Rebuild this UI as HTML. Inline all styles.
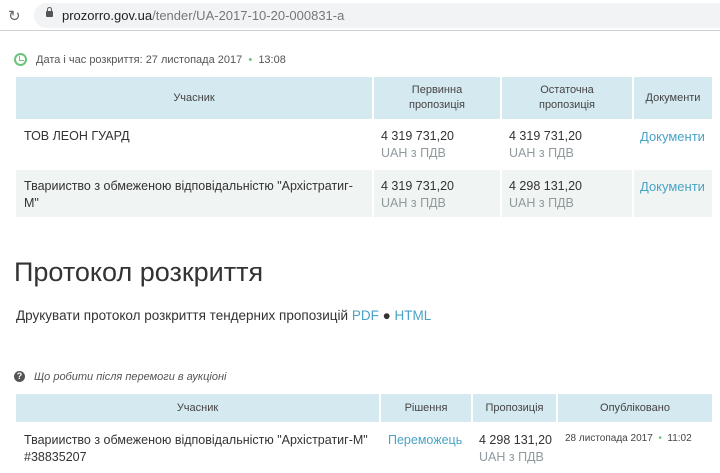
<!DOCTYPE html>
<html><head><meta charset="utf-8"><style>
*{margin:0;padding:0;box-sizing:border-box}
body{width:720px;height:473px;overflow:hidden;background:#fff;font-family:"Liberation Sans",sans-serif;color:#333;position:relative}
.a{position:absolute}
.hd{background:#d5eaf0;color:#444;font-size:11px;text-align:center;display:flex;align-items:center;justify-content:center;line-height:15px}
.c{font-size:12.5px;color:#333;line-height:17px}
.g{color:#8e9a9e}
.l{color:#4aa3c4}
</style></head><body>
<div class="a" style="left:0;top:0;width:720px;height:31px;background:#fff;border-bottom:1px solid #d0d0d0"></div>
<div class="a" style="left:8px;top:7px;font-size:15px;color:#666">&#x21bb;</div>
<div class="a" style="left:34px;top:3px;width:700px;height:25px;border-radius:13px;background:#f1f3f4"></div>
<div class="a" style="left:46px;top:11px;width:7px;height:6px;background:#555;border-radius:1px"></div>
<div class="a" style="left:47px;top:7px;width:5px;height:6px;border:1.5px solid #555;border-bottom:none;border-radius:3px 3px 0 0"></div>
<div class="a" style="left:62px;top:8px;font-size:13px;color:#202124">prozorro.gov.ua<span style="color:#777">/tender/UA-2017-10-20-000831-a</span></div>

<div class="a" style="left:14px;top:53px;width:13px;height:13px;border:2px solid #6cc47a;border-radius:50%"></div>
<div class="a" style="left:19px;top:56px;width:5px;height:5px;border-left:1.5px solid #6cc47a;border-bottom:1.5px solid #6cc47a"></div>
<div class="a" style="left:36px;top:54px;font-size:11px;color:#555">Дата і час розкриття: 27 листопада 2017 &nbsp;<span style="color:#6cc47a">•</span>&nbsp; 13:08</div>

<div class="a hd" style="left:16px;top:77px;width:356px;height:42px">Учасник</div>
<div class="a hd" style="left:374px;top:77px;width:126px;height:42px">Первинна<br>пропозиція</div>
<div class="a hd" style="left:502px;top:77px;width:130px;height:42px">Остаточна<br>пропозиція</div>
<div class="a hd" style="left:634px;top:77px;width:78px;height:42px">Документи</div>

<div class="a c" style="left:24px;top:128px">ТОВ ЛЕОН ГУАРД</div>
<div class="a c" style="left:381px;top:128px">4 319 731,20<br><span class="g">UAH з ПДВ</span></div>
<div class="a c" style="left:509px;top:128px">4 319 731,20<br><span class="g">UAH з ПДВ</span></div>
<div class="a c l" style="left:640px;top:128px;font-size:13px">Документи</div>

<div class="a" style="left:16px;top:170px;width:356px;height:47px;background:#f0f4f2"></div>
<div class="a" style="left:374px;top:170px;width:126px;height:47px;background:#f0f4f2"></div>
<div class="a" style="left:502px;top:170px;width:130px;height:47px;background:#f0f4f2"></div>
<div class="a" style="left:634px;top:170px;width:78px;height:47px;background:#f0f4f2"></div>
<div class="a c" style="left:24px;top:178px">Тварииство з обмеженою відповідальністю "Архістратиг-<br>М"</div>
<div class="a c" style="left:381px;top:178px">4 319 731,20<br><span class="g">UAH з ПДВ</span></div>
<div class="a c" style="left:509px;top:178px">4 298 131,20<br><span class="g">UAH з ПДВ</span></div>
<div class="a c l" style="left:640px;top:178px;font-size:13px">Документи</div>

<div class="a" style="left:14px;top:257px;font-size:27px;color:#333">Протокол розкриття</div>
<div class="a" style="left:16px;top:308px;font-size:13.5px;color:#333">Друкувати протокол розкриття тендерних пропозицій <span class="l">PDF</span> ● <span class="l">HTML</span></div>

<div class="a" style="left:14px;top:371px;width:11px;height:11px;border-radius:50%;background:#555;color:#fff;font-size:9px;font-weight:bold;text-align:center;line-height:11px">?</div>
<div class="a" style="left:34px;top:371px;font-size:11px;font-style:italic;color:#555">Що робити після перемоги в аукціоні</div>

<div class="a hd" style="left:16px;top:394px;width:363px;height:28px">Учасник</div>
<div class="a hd" style="left:381px;top:394px;width:90px;height:28px">Рішення</div>
<div class="a hd" style="left:473px;top:394px;width:83px;height:28px">Пропозиція</div>
<div class="a hd" style="left:558px;top:394px;width:154px;height:28px">Опубліковано</div>
<div class="a c" style="left:24px;top:432px">Тварииство з обмеженою відповідальністю "Архістратиг-М"<br>#38835207</div>
<div class="a c l" style="left:388px;top:432px">Переможець</div>
<div class="a c" style="left:479px;top:432px">4 298 131,20<br><span class="g">UAH з ПДВ</span></div>
<div class="a" style="left:565px;top:433px;font-size:10px;color:#444">28 листопада 2017 &nbsp;<span style="color:#6cc47a">•</span>&nbsp; 11:02</div>
</body></html>
